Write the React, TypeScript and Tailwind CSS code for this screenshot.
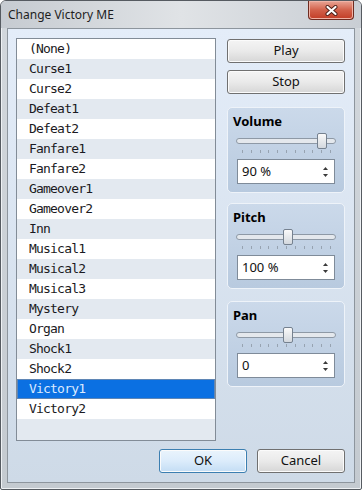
import React from "react";

const tracks = [
  "(None)",
  "Curse1",
  "Curse2",
  "Defeat1",
  "Defeat2",
  "Fanfare1",
  "Fanfare2",
  "Gameover1",
  "Gameover2",
  "Inn",
  "Musical1",
  "Musical2",
  "Musical3",
  "Mystery",
  "Organ",
  "Shock1",
  "Shock2",
  "Victory1",
  "Victory2",
];

function Btn({ label, primary, className = "" }: { label: string; primary?: boolean; className?: string }) {
  return (
    <div
      className={`h-[24px] rounded-[3px] border flex items-center justify-center text-[13px] text-[#111] shadow-[inset_0_0_0_1px_#fbfbfb] ${
        primary
          ? "border-[#3c7fb1] bg-linear-to-b from-[#eaf4fc] via-[#dcecfb] to-[#c3ddf4]"
          : "border-[#707070] bg-linear-to-b from-[#f4f4f4] via-[#eaeaea] to-[#d6d6d6]"
      } ${className}`}
    >
      {label}
    </div>
  );
}

function Group({ title, thumb, value, className = "" }: { title: string; thumb: number; value: string; className?: string }) {
  return (
    <div
      className={`w-[118px] h-[86px] rounded-[5px] border border-[#eef3f9] bg-linear-to-b from-[#cbd9ea] to-[#b8cadf] flex flex-col ${className}`}
    >
      <div className="mt-[4px] pl-[5px] h-[18px] leading-[18px] text-[13px] font-bold text-black">{title}</div>
      <div className="mt-[3px] ml-[8px] relative w-[100px] h-[16px]">
        <div className="mt-[5px] h-[6px] rounded-full border border-[#8e99a6] bg-[#e4e8ed]" />
        <div
          className="absolute top-0 w-[10px] h-[16px] rounded-[2px] border border-[#75818f] bg-linear-to-b from-[#fafafa] to-[#d3d8de]"
          style={{ left: thumb }}
        />
      </div>
      <div className="mt-[1px] ml-[14px] w-[89px] h-[3px] flex justify-between">
        {Array.from({ length: 11 }).map((_, i) => (
          <div key={i} className="w-px h-[3px] bg-[#97a3b1]" />
        ))}
      </div>
      <div className="mt-[6px] ml-[9px] w-[98px] h-[25px] border border-[#7f8b99] bg-white flex items-center pl-[4px] text-[13px] text-[#111]">
        <span className="flex-1">{value}</span>
        <svg width="7" height="14" viewBox="0 0 7 14" className="mr-[5px]">
          <path d="M3.5 2 L6 5 L1 5 Z" fill="#3a3a3a" />
          <path d="M3.5 12 L6 9 L1 9 Z" fill="#3a3a3a" />
        </svg>
      </div>
    </div>
  );
}

export default function App() {
  return (
    <div className="w-[362px] h-[491px] bg-white font-['Noto_Sans','Open_Sans',sans-serif]">
      <div className="relative w-[362px] h-[490px] border border-[#565b61] rounded-t-[6px] rounded-b-[2px] bg-linear-to-b from-[#d3d8dd] to-[#c4cad0] shadow-[inset_0_0_0_1px_#eef1f4] flex flex-col">
        <div className="h-[27px] flex items-center pl-[7px] rounded-t-[5px] bg-linear-to-r from-[#c6cbd1] via-[#e0e3e6] to-[#c9ced4] text-[12px] text-[#1e1e1e]">
          Change Victory ME
        </div>
        <div className="absolute top-0 right-[7px] w-[46px] h-[19px] rounded-b-[4px] border border-t-0 border-[#6e2b20] bg-linear-to-b from-[#e8a596] via-[#d2604a] to-[#c23c25] shadow-[inset_0_0_0_1px_#f0b3a6] flex items-center justify-center">
          <svg width="13" height="11" viewBox="0 0 13 11">
            <path d="M2.5 2 L10.5 9 M10.5 2 L2.5 9" stroke="#4a1d16" strokeWidth="4" strokeLinecap="round" />
            <path d="M2.5 2 L10.5 9 M10.5 2 L2.5 9" stroke="#ffffff" strokeWidth="2.2" strokeLinecap="round" />
          </svg>
        </div>
        <div className="mx-[6px] mb-[6px] flex-1 border border-[#8d959d] bg-linear-to-b from-[#e4edf9] to-[#cedae7] flex flex-col pt-[9px] pl-[8px] pr-[9px] pb-[9px]">
          <div className="flex gap-[11px]">
            <div className="w-[200px] h-[403px] border border-[#828c97] bg-[#e3e9f0] font-['DejaVu_Sans_Mono',monospace] text-[13px] tracking-[-0.8px]">
              {tracks.map((t, i) =>
                t === "Victory1" ? (
                  <div
                    key={t}
                    className="h-[20px] border border-[#5f86b5] bg-[#0b70e2] text-[#dceaff] flex items-center pl-[11px]"
                  >
                    {t}
                  </div>
                ) : (
                  <div
                    key={t}
                    className={`h-[20px] flex items-center pl-[12px] text-[#1a1a22] ${i % 2 === 0 ? "bg-white" : "bg-[#e3e9f0]"}`}
                  >
                    {t}
                  </div>
                )
              )}
            </div>
            <div className="w-[118px] pt-[1px] flex flex-col">
              <Btn label="Play" />
              <Btn label="Stop" className="mt-[7px]" />
              <Group title="Volume" thumb={81} value="90 %" className="mt-[13px]" />
              <Group title="Pitch" thumb={47} value="100 %" className="mt-[10px]" />
              <Group title="Pan" thumb={47} value="0" className="mt-[12px]" />
            </div>
          </div>
          <div className="mt-[8px] flex justify-end gap-[10px]">
            <Btn label="OK" primary className="w-[88px]" />
            <Btn label="Cancel" className="w-[88px]" />
          </div>
        </div>
      </div>
    </div>
  );
}
